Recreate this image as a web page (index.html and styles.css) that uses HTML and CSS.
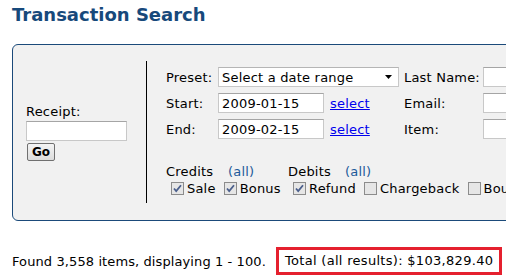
FILE: index.html
```html
<!DOCTYPE html>
<html>
<head>
<meta charset="utf-8">
<link rel="stylesheet" href="styles.css">
</head>
<body>
<h1 class="title">Transaction Search</h1>
<div class="panel">
  <div class="left">
    <div class="receipt">
      <div class="lbl">Receipt:</div>
      <input class="txt receipt-input" type="text">
      <button class="go">Go</button>
    </div>
  </div>
  <div class="right">
    <div class="grid">
      <div class="lbl">Preset:</div>
      <div class="field"><div class="select"><span>Select a date range</span><svg class="arrow" width="7" height="4" viewBox="0 0 7 4"><path d="M0 0H7L3.5 4Z" fill="#000"/></svg></div></div>
      <div class="lbl">Last Name:</div>
      <div class="field"><input class="txt wide" type="text"></div>

      <div class="lbl">Start:</div>
      <div class="field"><input class="txt date" type="text" value="2009-01-15"><a class="link" href="#">select</a></div>
      <div class="lbl">Email:</div>
      <div class="field"><input class="txt wide" type="text"></div>

      <div class="lbl">End:</div>
      <div class="field"><input class="txt date" type="text" value="2009-02-15"><a class="link" href="#">select</a></div>
      <div class="lbl">Item:</div>
      <div class="field"><input class="txt wide" type="text"></div>
    </div>
    <div class="groups">
      <div class="group credits">
        <div class="ghead"><span class="gname credits">Credits</span><span class="all">(all)</span></div>
        <div class="checks">
          <span class="chk"><svg class="box" width="13" height="13" viewBox="0 0 13 13"><rect x="0.5" y="0.5" width="12" height="12" fill="#e6e6e6" stroke="#8c8c8c"/><path d="M3 6.5L5.2 9L10 3.2" fill="none" stroke="#4b5f8c" stroke-width="1.8"/></svg>Sale</span>
          <span class="chk"><svg class="box" width="13" height="13" viewBox="0 0 13 13"><rect x="0.5" y="0.5" width="12" height="12" fill="#e6e6e6" stroke="#8c8c8c"/><path d="M3 6.5L5.2 9L10 3.2" fill="none" stroke="#4b5f8c" stroke-width="1.8"/></svg>Bonus</span>
        </div>
      </div>
      <div class="group debits">
        <div class="ghead"><span class="gname debits">Debits</span><span class="all">(all)</span></div>
        <div class="checks">
          <span class="chk"><svg class="box" width="13" height="13" viewBox="0 0 13 13"><rect x="0.5" y="0.5" width="12" height="12" fill="#e6e6e6" stroke="#8c8c8c"/><path d="M3 6.5L5.2 9L10 3.2" fill="none" stroke="#4b5f8c" stroke-width="1.8"/></svg>Refund</span>
          <span class="chk"><svg class="box" width="13" height="13" viewBox="0 0 13 13"><rect x="0.5" y="0.5" width="12" height="12" fill="#e6e6e6" stroke="#8c8c8c"/></svg>Chargeback</span>
          <span class="chk"><svg class="box" width="13" height="13" viewBox="0 0 13 13"><rect x="0.5" y="0.5" width="12" height="12" fill="#e6e6e6" stroke="#8c8c8c"/></svg>Bounced</span>
        </div>
      </div>
    </div>
  </div>
</div>
<div class="footer">
  <span class="found">Found 3,558 items, displaying 1 - 100.</span>
  <span class="total">Total (all results): $103,829.40</span>
</div>
</body>
</html>
```
FILE: styles.css
```css
html, body {
  margin: 0;
  overflow: hidden;
}
body {
  padding: 4px 12px 0 12px;
  width: 700px;
  font-family: "DejaVu Sans", Verdana, sans-serif;
  font-size: 13px;
  letter-spacing: 0.2px;
  color: #000;
  background: #fff;
}
.title {
  margin: 0;
  font-size: 18px;
  line-height: 22px;
  font-weight: bold;
  letter-spacing: 0;
  color: #17497b;
}
.panel {
  margin-top: 18px;
  width: 600px;
  box-sizing: border-box;
  border: 1px solid #1b4a7a;
  border-radius: 6px;
  background: #f1f1f1;
  padding: 16px 0 17px 0;
  display: flex;
  align-items: center;
}
.left {
  width: 133px;
  box-sizing: border-box;
  padding-left: 13px;
  align-self: center;
}
.receipt .lbl {
  line-height: 16px;
}
.txt {
  display: block;
  box-sizing: border-box;
  height: 20px;
  margin: 0;
  padding: 0 3px;
  border: 1px solid #c8c8c8;
  border-top-color: #a5a5a5;
  background: #fff;
  font-family: "DejaVu Sans", Verdana, sans-serif;
  font-size: 13px;
  letter-spacing: 0.2px;
  color: #000;
  outline: none;
}
.receipt-input {
  width: 101px;
  margin-top: 1px;
}
.go {
  display: block;
  margin: 2px 0 0 1px;
  height: 18px;
  width: 28px;
  padding: 0;
  box-sizing: border-box;
  border: 1px solid #707070;
  border-radius: 2px;
  background: linear-gradient(#f4f4f4, #dcdcdc);
  font-family: "DejaVu Sans", Verdana, sans-serif;
  font-size: 12px;
  font-weight: bold;
  line-height: 14px;
  color: #000;
}
.right {
  border-left: 1px solid #000;
  padding: 6px 0 6px 19px;
}
.grid {
  display: grid;
  grid-template-columns: 52px 186px 79px 60px;
  grid-auto-rows: 20px;
  row-gap: 6px;
  align-items: center;
}
.field {
  display: flex;
  align-items: center;
  height: 20px;
}
.select {
  box-sizing: border-box;
  width: 181px;
  height: 20px;
  border: 1px solid #c8c8c8;
  border-top-color: #b5b5b5;
  background: #fff;
  display: flex;
  align-items: center;
  justify-content: space-between;
  padding: 0 6px 0 3px;
}
.arrow {
  display: block;
}
.date {
  width: 106px;
}
.wide {
  width: 60px;
}
.link {
  margin-left: 6px;
  color: #0000ee;
  text-decoration: underline;
}
.groups {
  margin-top: 25px;
  display: flex;
}
.group.credits {
  width: 122px;
  flex: none;
}
.ghead {
  line-height: 16px;
  display: flex;
}
.gname.credits {
  width: 62px;
}
.gname.debits {
  width: 57px;
}
.all {
  color: #1d5a9a;
}
.checks {
  display: flex;
  padding-left: 5px;
  gap: 8px;
  line-height: 17px;
  height: 17px;
  white-space: nowrap;
}
.chk {
  display: flex;
  align-items: center;
  gap: 3px;
}
.box {
  display: block;
  flex: none;
}
.footer {
  margin-top: 26px;
  display: flex;
  align-items: center;
}
.found {
  letter-spacing: 0.1px;
}
.total {
  margin-left: 10px;
  border: 3px solid #e5202e;
  padding: 0 6px;
  line-height: 22px;
  letter-spacing: 0.3px;
  white-space: nowrap;
}
```
